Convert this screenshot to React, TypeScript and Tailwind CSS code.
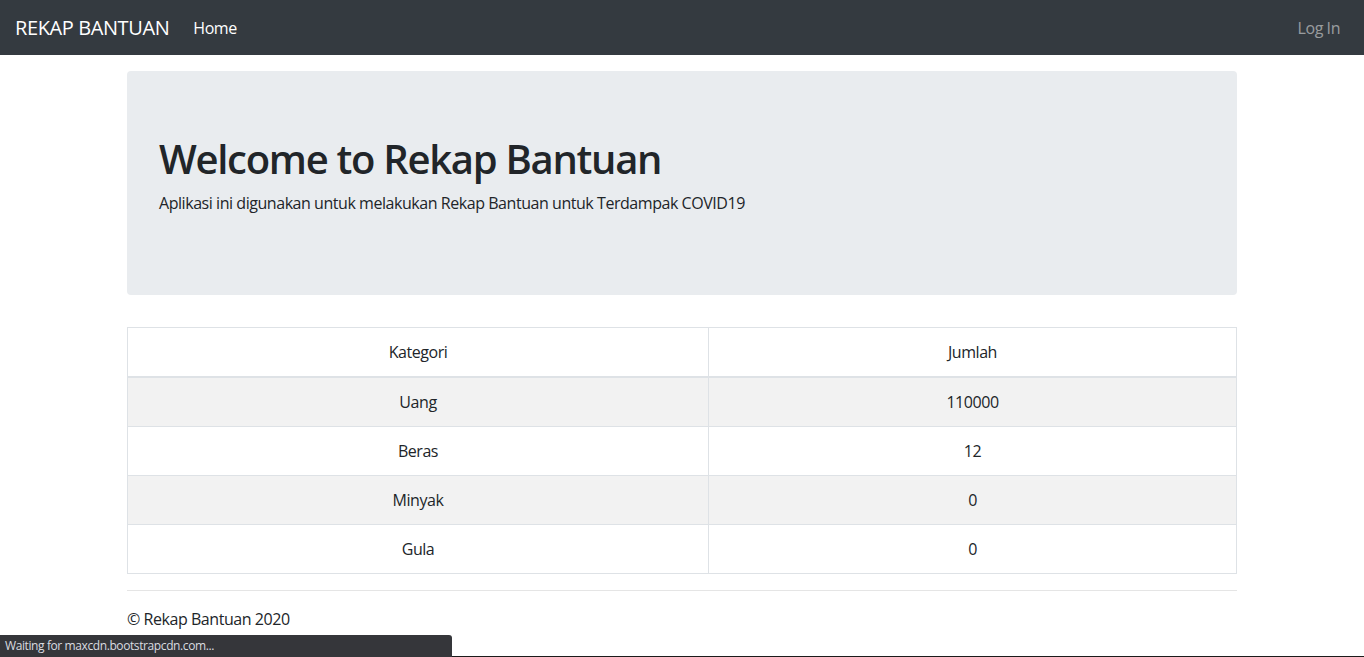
const rows = [
  { kategori: "Uang", jumlah: "110000" },
  { kategori: "Beras", jumlah: "12" },
  { kategori: "Minyak", jumlah: "0" },
  { kategori: "Gula", jumlah: "0" },
];

export default function App() {
  return (
    <div className="min-h-screen bg-white text-[16px] leading-6 tracking-[-0.45px] text-[#212529] font-['Open_Sans',sans-serif]">
      <nav className="flex h-[55px] items-center bg-[#343a40] pl-[15px] pr-4">
        <a className="mr-4 text-[20px] leading-[30px] tracking-[-0.4px] text-white">REKAP BANTUAN</a>
        <a className="px-2 text-white">Home</a>
        <a className="ml-auto px-2 text-white/50">Log In</a>
      </nav>

      <div className="mx-auto w-[1110px]">
        <div className="mt-4 mb-8 rounded bg-[#e9ecef] px-8 py-16">
          <h1 className="mb-2 text-[40px] leading-[48px] font-semibold tracking-[-1.3px]">
            Welcome to Rekap Bantuan
          </h1>
          <p className="mb-4">
            Aplikasi ini digunakan untuk melakukan Rekap Bantuan untuk Terdampak COVID19
          </p>
        </div>

        <table className="mb-4 w-full border-collapse border border-[#dee2e6] text-center">
          <thead>
            <tr>
              <th className="w-[581px] border border-b-2 border-[#dee2e6] p-3 font-normal">
                Kategori
              </th>
              <th className="border border-b-2 border-[#dee2e6] p-3 font-normal">
                Jumlah
              </th>
            </tr>
          </thead>
          <tbody>
            {rows.map((r, i) => (
              <tr key={r.kategori} className={i % 2 === 0 ? "bg-[#f2f2f2]" : ""}>
                <td className="border border-[#dee2e6] p-3">{r.kategori}</td>
                <td className="border border-[#dee2e6] p-3">{r.jumlah}</td>
              </tr>
            ))}
          </tbody>
        </table>

        <hr className="my-4 border-t border-black/10" />
        <footer>© Rekap Bantuan 2020</footer>
      </div>

      {/* browser status bubble */}
      <div className="fixed bottom-0 left-0 h-[22px] w-[452px] rounded-tr-[3px] bg-[#35363a] pl-[5px] text-[12px] leading-[22px] tracking-[-0.4px] text-[#dadce0]">
        Waiting for maxcdn.bootstrapcdn.com...
      </div>
      <div className="fixed bottom-0 left-[452px] right-0 h-px bg-[#1b1b1b]" />
    </div>
  );
}
